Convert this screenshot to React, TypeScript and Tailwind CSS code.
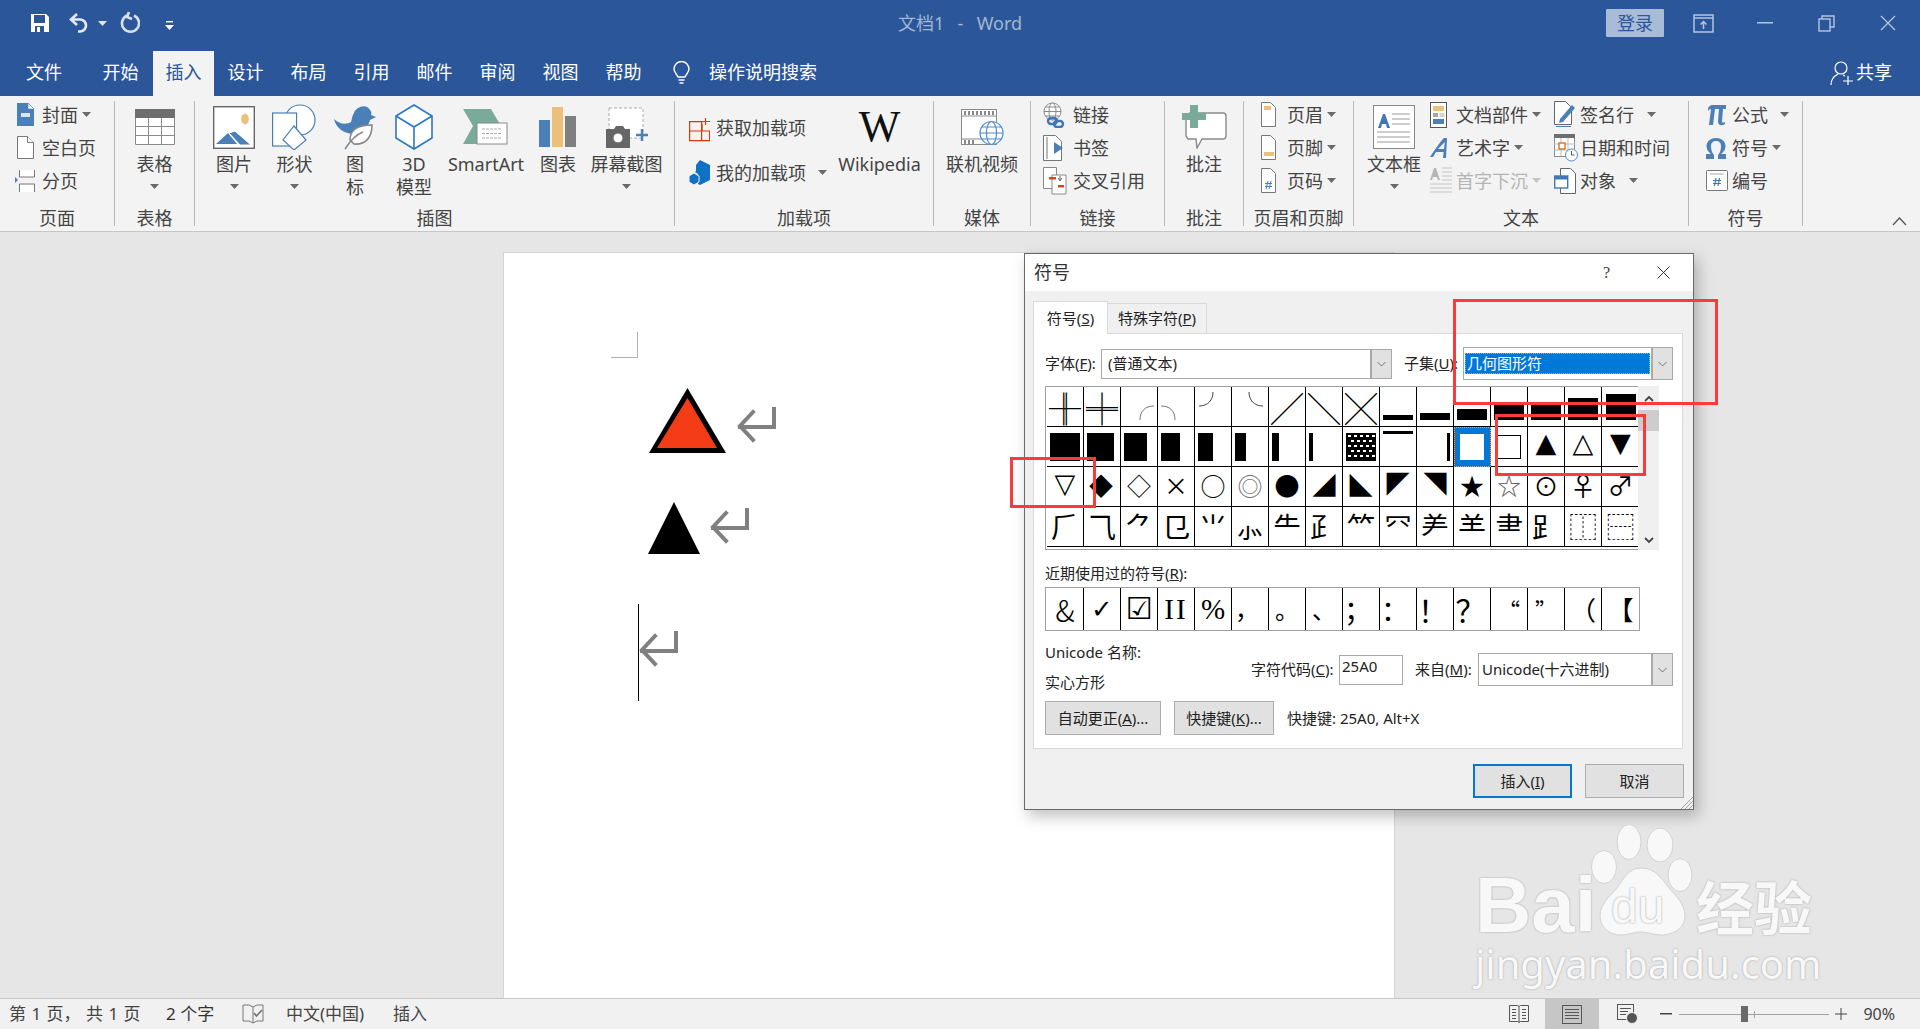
import React from "react";

const Caret = ({ c = "#6a6a6a" }: { c?: string }) => (
  <svg width="9" height="5" viewBox="0 0 9 5" className="shrink-0"><path d="M0 0h9L4.5 5z" fill={c} /></svg>
);

const I = {
  save: <svg width="20" height="20" viewBox="0 0 20 20"><path d="M1 1h15l3 3v15H1z" fill="#fff" /><rect x="4" y="2" width="11" height="8" fill="#2b579a" /><rect x="5" y="13" width="9" height="6" fill="#2b579a" /><rect x="7" y="14" width="3" height="5" fill="#fff" /></svg>,
  undo: <svg width="22" height="22" viewBox="0 0 22 22" fill="none" stroke="#e4e9f2" strokeWidth="2.6"><path d="M9 2 3 7.5 9 13" /><path d="M3 7.5h9a6 6 0 0 1 0 12h-2" /></svg>,
  redo: <svg width="20" height="24" viewBox="0 0 20 24" fill="none" stroke="#d6dfed" strokeWidth="2.6"><path d="M7 4.5a8.5 8.5 0 1 0 7 0" /><path d="M9 1 7 6l5 2" /></svg>,
  qat: <svg width="9" height="9" viewBox="0 0 9 9"><rect x="1" y="0" width="7" height="1.4" fill="#fff" /><path d="M0 4h9L4.5 9z" fill="#fff" /></svg>,
  bulb: <svg width="17" height="24" viewBox="0 0 17 24" fill="none" stroke="#fff" strokeWidth="1.4"><path d="M5 16C3 12 1 10.500 1 8a7.500 7.500 0 0 1 15 0c0 2.500-2 4-4 8z" /><path d="M5.500 19h6M6.500 22h4" /></svg>,
  share: <svg width="24" height="26" viewBox="0 0 24 26" fill="none" stroke="#fff" strokeWidth="1.2"><circle cx="11" cy="8" r="6" /><path d="M1 25c0-6 3-9 7-11M13 15l2 1" /><path d="M13 21h10M18 16v9" /></svg>,
  disp: <svg width="21" height="19" viewBox="0 0 21 19" fill="none" stroke="#b5c5dd" strokeWidth="1.5"><rect x="1" y="1" width="19" height="17" /><path d="M1 4h19" /><path d="M10.500 15V8M7.500 10.500l3-3 3 3" /></svg>,
  minus: <svg width="16" height="2" viewBox="0 0 16 2"><rect width="16" height="1.500" fill="#b5c5dd" /></svg>,
  restore: <svg width="17" height="17" viewBox="0 0 17 17" fill="none" stroke="#b5c5dd" strokeWidth="1.400"><rect x="1" y="4" width="11" height="12" /><path d="M4 4V1h12v11h-4" /></svg>,
  close: <svg width="16" height="16" viewBox="0 0 16 16" fill="none" stroke="#b5c5dd" strokeWidth="1.300"><path d="M1 1l14 14M15 1 1 15" /></svg>,
  cover: <svg width="17" height="23" viewBox="0 0 17 23"><path d="M0 0h11l6 6v17H0z" fill="#4a7fb8" /><path d="M11 0l6 6h-6z" fill="#fff" stroke="#4a7fb8" strokeWidth=".6" /><rect x="4" y="10" width="9" height="4" fill="#dbe6f2" /></svg>,
  blank: <svg width="17" height="23" viewBox="0 0 17 23" fill="#fff" stroke="#777"><path d="M.5.500h10l6 6v16H.500z" /><path d="M10.500.500v6h6" /></svg>,
  pgbreak: <svg width="21" height="24" viewBox="0 0 21 24"><path d="M0 8l3 3-3 3z" fill="#4a7fb8" /><path d="M4.500 1v7h15V1M4.500 23v-8h15v8" fill="#fff" stroke="#777" /></svg>,
  table: <svg width="40" height="36" viewBox="0 0 40 36"><rect width="40" height="36" fill="#fff" /><rect width="40" height="9" fill="#6e6e6e" /><path d="M.5 9v26.500h39V9M.5 17.500h39M.5 26.500h39M13.500 9v26M26.500 9v26" fill="none" stroke="#8a8a8a" /></svg>,
  picture: <svg width="42" height="43" viewBox="0 0 42 43"><rect x=".7" y=".7" width="40.600" height="41.600" fill="#fff" stroke="#666" strokeWidth="1.400" /><ellipse cx="32" cy="13" rx="3.800" ry="5.400" fill="#edc07a" /><path d="M3 38 15 27l9 11z" fill="#4a7fb8" /><path d="M16 27l6-2 16 14H27z" fill="#4a7fb8" stroke="#fff" /></svg>,
  shape: <svg width="45" height="46" viewBox="0 0 45 46" fill="#fff" stroke="#4a7fb8" strokeWidth="1.200"><circle cx="28" cy="16" r="15" /><rect x=".6" y="9" width="24" height="33" /><path d="M22 22l12 14-12 10-11-10z" /></svg>,
  duck: <svg width="43" height="46" viewBox="0 0 43 46"><path d="M0 15c5 5 12 6 17 3 1-3 1-6 3-9 2-6 12-10 16-3 1 1 2 3 1 5l5 2-6 3c-2 8-9 14-15 14C10 30 2 24 0 15z" fill="#4a7fb8" /><path d="M16 36c0-10 8-15 22-15 0 12-6 20-18 19z" fill="#fff" stroke="#888" strokeWidth="1.600" /><path d="M11 45c5-8 10-14 18-17" fill="none" stroke="#888" strokeWidth="1.600" /></svg>,
  cube: <svg width="40" height="46" viewBox="0 0 40 46" fill="#fff" stroke="#2a78c6" strokeWidth="1.600"><path d="M20 1l18 11v22L20 45 2 34V12z" /><path d="M2 12l18 11 18-11M20 23v22" /></svg>,
  smart: <svg width="46" height="36" viewBox="0 0 46 36"><path d="M0 0h28l10 17-10 18H0l10-18z" fill="#7aab9a" /><rect x="14" y="14" width="30" height="21" fill="#fff" stroke="#888" /><path d="M19 20h20M19 24.500h20M19 29h20" stroke="#aaa" strokeDasharray="3 1" /></svg>,
  chart: <svg width="38" height="40" viewBox="0 0 38 40"><rect y="13" width="11" height="27" fill="#4a7fb8" /><rect x="13" width="11" height="40" fill="#edc07a" /><rect x="26" y="9" width="11" height="31" fill="#7f7f7f" /></svg>,
  shot: <svg width="42" height="41" viewBox="0 0 42 41"><rect x="3" y="1" width="34" height="30" fill="#fff" stroke="#aaa" strokeDasharray="3 2" /><path d="M0 22h8l2-3h7l2 3h5v19H0z" fill="#666" /><circle cx="12" cy="31" r="5" fill="#fff" stroke="#666" /><path d="M36 22v12M30 28h12" stroke="#4a7fb8" strokeWidth="2.400" /></svg>,
  store: <svg width="21" height="29" viewBox="0 0 21 29" fill="none" stroke="#d83b01" strokeWidth="1.200"><path d="M.6 8.600h12v19H.6zM.6 18h20v9.600h-8M12.600 8.600h1" /><path d="M13 18v-7M16.500 5v7M13 8.500h8" /></svg>,
  mine: <svg width="22" height="25" viewBox="0 0 22 25"><path d="M11 0l10 5v15l-10 5-2-1V14l-3-2 1-1V5z" fill="#0e71c5" /><path d="M5 13l5 3v6l-5 3-5-3v-6z" fill="#0e71c5" stroke="#f3f3f3" /></svg>,
  video: <svg width="43" height="37" viewBox="0 0 43 37"><rect x=".5" y=".5" width="35" height="35" fill="#fff" stroke="#8a8a8a" /><path d="M.5 7h35M.5 30h35" stroke="#8a8a8a" /><path d="M4 2v4M8 2v4M12 2v4M16 2v4M20 2v4M24 2v4M28 2v4M32 2v4M4 31v4M8 31v4M12 31v4" stroke="#8a8a8a" strokeWidth="2" /><g fill="#fff" stroke="#4a8cc9" strokeWidth="1.200"><circle cx="30.500" cy="24" r="11.500" /><ellipse cx="30.500" cy="24" rx="5" ry="11.500" /><path d="M19 24h23M21 18h19M21 30h19" /></g></svg>,
  link: <svg width="23" height="26" viewBox="0 0 23 26"><g fill="#fff" stroke="#8a8a8a"><circle cx="9.500" cy="9.500" r="8.500" /><ellipse cx="9.500" cy="9.500" rx="3.500" ry="8.500" /><path d="M1 9.500h17M2.500 5h14M2.500 14h14" /></g><g fill="none" stroke="#3f78b5" strokeWidth="2.400"><rect x="5" y="16" width="9" height="6" rx="3" /><rect x="11" y="19" width="9" height="6" rx="3" /></g></svg>,
  mark: <svg width="21" height="26" viewBox="0 0 21 26"><path d="M.5.500h12l6 6v19H.5z" fill="#fff" stroke="#777" /><path d="M4 2v22" stroke="#777" /><path d="M11 7l9 6-9 6z" fill="#4a7fb8" /></svg>,
  cross: <svg width="24" height="28" viewBox="0 0 24 28"><path d="M.5.500h13l0 21H.5z" fill="#fff" stroke="#888" /><path d="M9 8h14v19H9z" fill="#fff" stroke="#888" /><rect x="6" y="10" width="7" height="2.500" fill="#cf4a1f" /><path d="M17 9v4M15 11l2 3 2-3" fill="none" stroke="#666" /><rect x="15" y="18" width="6" height="2.500" fill="#cf4a1f" /></svg>,
  comment: <svg width="45" height="44" viewBox="0 0 45 44"><path d="M8 8h33a3 3 0 0 1 3 3v20a3 3 0 0 1-3 3H20l-5 9-1-9H6l-2-3V10z" fill="#fff" stroke="#8a8a8a" strokeWidth="1.400" /><path d="M8 0h8v8h8v7h-8v8H8v-8H0V8h8z" fill="#7aab9a" /></svg>,
  head: <svg width="15" height="25" viewBox="0 0 15 25"><path d="M.5.500h9l5 5v19H.5z" fill="#fff" stroke="#777" /><rect x="3" y="4" width="7" height="4" fill="#edc07a" /></svg>,
  foot: <svg width="15" height="25" viewBox="0 0 15 25"><path d="M.5.500h9l5 5v19H.5z" fill="#fff" stroke="#777" /><rect x="3" y="17" width="10" height="4" fill="#edc07a" /></svg>,
  pnum: <svg width="15" height="25" viewBox="0 0 15 25"><path d="M.5.500h9l5 5v19H.5z" fill="#fff" stroke="#777" /><path d="M7 13l-2 8M10 13l-2 8M4 15.500h7M4 18.500h7" stroke="#4a7fb8" /></svg>,
  textbox: <svg width="42" height="44" viewBox="0 0 42 44"><rect x=".5" y=".5" width="41" height="43" fill="#fff" stroke="#888" /><path d="M5 23 10 9h2l5 14h-3l-1-4H9l-1 4z" fill="#3f78b5" /><path d="M19 9h18M19 14h18M19 19h18M4 27h33M4 32h33M4 37h33" stroke="#999" /></svg>,
  parts: <svg width="17" height="26" viewBox="0 0 17 26"><rect x=".5" y=".5" width="16" height="25" fill="#fff" stroke="#555" /><rect x="3" y="4" width="11" height="5" fill="#edc07a" /><rect x="3" y="11" width="5" height="4" fill="#a6a6a6" /><path d="M9.500 12h5M9.500 14h5" stroke="#a6a6a6" /><rect x="3" y="17" width="11" height="5" fill="#4a7fb8" /></svg>,
  wordart: <svg width="17" height="22" viewBox="0 0 17 22"><path d="M0 20C4 14 9 6 14 1h3l-1 20h-3l.6-6H6l-3 5zM8 12h6l.8-7z" fill="#4a7fb8" /></svg>,
  dropcap: <svg width="22" height="27" viewBox="0 0 22 27"><path d="M0 13 4 1h2l4 12H8l-1-3H3l-1 3z" fill="#b5b5b5" /><path d="M12 1h10M12 5h10M12 9h10M12 13h10M0 17h22M0 21h22M0 25h22" stroke="#c4c4c4" /></svg>,
  sign: <svg width="22" height="27" viewBox="0 0 22 27"><path d="M.5.500h11l6 6v17H.5z" fill="#fff" stroke="#666" /><path d="M6 18 18 4l3 3L9 21l-4 1z" fill="#4a7fb8" /><path d="M2 25.500h15" stroke="#4a7fb8" /></svg>,
  date: <svg width="24" height="28" viewBox="0 0 24 28"><rect x=".5" y=".5" width="20" height="22" fill="#fff" stroke="#8a8a8a" /><rect width="21" height="4" fill="#6e6e6e" /><path d="M7 4v18M14 4v18M0 10h21M0 16h21" stroke="#bbb" /><rect x="5" y="9" width="6" height="6" fill="#fff" stroke="#d8690f" strokeWidth="1.300" /><circle cx="17.500" cy="21" r="6" fill="#fff" stroke="#4a8cc9" /><path d="M17.500 17v4h3" fill="none" stroke="#555" /></svg>,
  obj: <svg width="22" height="26" viewBox="0 0 22 26"><path d="M6.500.500h10l5 5v20h-15z" fill="#fff" stroke="#666" /><rect x=".7" y="8" width="13" height="12" fill="#fff" stroke="#3f78b5" strokeWidth="1.400" /><rect y="8" width="14" height="3.500" fill="#3f78b5" /></svg>,
  pi: <svg width="20" height="22" viewBox="0 0 20 22"><path d="M2 6c0-3 2-5 5-5h13v4h-3l-1 12c0 2 1 2 3 1v2c-3 2-7 2-7-3l1-12H9l-2 16H3L5 5C3 5 3 6 2.500 7z" fill="#4a7fb8" /></svg>,
  omega: <svg width="20" height="22" viewBox="0 0 20 22"><path d="M0 22v-5h5C2 15 .5 12 .5 9 .5 4 5 1 10 1s9.500 3 9.500 8c0 3-1.500 6-4.500 8h5v5h-8v-4c2-2 3-5 3-9 0-3-2-5-5-5s-5 2-5 5c0 4 1 7 3 9v4z" fill="#4a7fb8" /></svg>,
  num: <svg width="22" height="22" viewBox="0 0 22 22"><rect x=".5" y=".5" width="21" height="20" rx="1" fill="#fff" stroke="#777" /><path d="M4 4h14" stroke="#aaa" /><path d="M10 8l-1.500 8M13.500 8 12 16M7 10.500h8M7 13.500h8" stroke="#3f78b5" strokeWidth="1.200" /></svg>,
  book: <svg width="22" height="20" viewBox="0 0 22 20" fill="none" stroke="#777"><path d="M11 3 7 1H1v16h6l4 2 4-2h6V1h-6z" /><path d="M11 3v16" /><path d="M12 9l2.500 3L20 6" stroke="#777" strokeWidth="1.800" /></svg>,
  read: <svg width="20" height="18" viewBox="0 0 20 18" fill="none" stroke="#555"><path d="M.5.500h8l1.500 1 1.500-1h8v16h-8L10 17.500l-1.500-1h-8zM10 1.500v16M3 4.500h4M3 7.500h4M3 10.500h4M3 13.500h4M13 4.500h4M13 7.500h4M13 10.500h4M13 13.500h4" /></svg>,
  print: <svg width="20" height="19" viewBox="0 0 20 19" fill="none" stroke="#555"><rect x=".5" y=".5" width="19" height="18" /><path d="M3 4.500h14M3 7.500h14M3 10.500h14M3 13.500h14" /></svg>,
  web: <svg width="21" height="20" viewBox="0 0 21 20"><rect x=".5" y=".5" width="16" height="15" fill="none" stroke="#555" /><path d="M3 4.500h11M3 7.500h8M3 10.500h6" stroke="#555" /><circle cx="15" cy="14" r="5.500" fill="#555" stroke="#f1f1f1" /></svg>,
};

function Small({ icon, w, label, arrow, gap, dim, arrowGap }: { icon: React.ReactNode; w: string; label: string; arrow?: boolean; gap?: string; dim?: boolean; arrowGap?: string }) {
  return (
    <div className={`flex items-center h-[29px] ${gap || ""} ${dim ? "text-[#b4b4b4]" : ""}`}>
      <span className={`flex items-center justify-center shrink-0 ${w}`}>{icon}</span>
      <span className="whitespace-nowrap leading-none">{label}</span>
      {arrow && <span className={`${arrowGap || "ml-[4px]"} flex items-center`}><Caret c={dim ? "#c4c4c4" : "#6a6a6a"} /></span>}
    </div>
  );
}

function Big({ icon, w, lines, arrow }: { icon: React.ReactNode; w: string; lines: string[]; arrow?: boolean }) {
  return (
    <div className={`flex flex-col items-center shrink-0 ${w}`}>
      <div className="h-[52px] flex items-center justify-center">{icon}</div>
      {lines.map((l) => (
        <div key={l} className="h-[23px] leading-[23px] whitespace-nowrap">{l}</div>
      ))}
      {arrow && <div className="h-[21px] flex items-center"><Caret /></div>}
    </div>
  );
}

function Group({ w, label, children, noBorder }: { w: string; label: string; children: React.ReactNode; noBorder?: boolean }) {
  return (
    <div className={`flex flex-col h-[125px] mt-[5px] shrink-0 ${w} ${noBorder ? "" : "border-r border-[#b9b9b9]"}`}>
      <div className="flex-1 flex min-h-0">{children}</div>
      <div className="h-[18px] leading-[20px] text-center whitespace-nowrap">{label}</div>
    </div>
  );
}

const Col = ({ className, children }: { className: string; children: React.ReactNode }) => (
  <div className={`flex flex-col gap-[4px] -mt-[1px] ${className}`}>{children}</div>
);

function Cell({ c, last, children, align }: { c?: string; last?: boolean; children?: React.ReactNode; align?: string }) {
  return (
    <div className={`w-[37px] h-[40px] shrink-0 border-b border-black flex ${align || "items-center justify-center"} ${last ? "" : "border-r"} ${c || ""}`}>
      {children}
    </div>
  );
}

const geo = "font-['DejaVu_Sans',sans-serif] leading-none";
const cjk = "font-['Noto_Sans_CJK_SC',sans-serif] leading-none";
const serif = "font-['Liberation_Serif',serif] leading-none";

const Bar = ({ c }: { c: string }) => <div className={`bg-black shrink-0 ${c}`} />;

function SymbolGrid() {
  return (
    <div className="flex">
      <div className="w-[593px] h-[164px] border border-r-0 border-[#a0a0a0] pl-[1px] overflow-hidden text-black bg-white">
        <div className="flex">
          <Cell><span className={`${cjk} text-[32px]`}>╫</span></Cell>
          <Cell><span className={`${cjk} text-[32px]`}>╪</span></Cell>
          <Cell align="items-end justify-end pr-[2px] pb-[6px]"><svg width="16" height="15" viewBox="0 0 16 15" fill="none" stroke="#777"><path d="M1 15C1 6 6 1 15 1" /></svg></Cell>
          <Cell align="items-end justify-start pl-[2px] pb-[6px]"><svg width="16" height="15" viewBox="0 0 16 15" fill="none" stroke="#777"><path d="M1 1c9 0 14 5 14 14" /></svg></Cell>
          <Cell align="items-start justify-start pl-[3px]"><svg width="16" height="16" viewBox="0 0 16 16" fill="none" stroke="#444" className="mt-[5px]"><path d="M15 0c0 8-5 14-14 14" /></svg></Cell>
          <Cell align="items-start justify-end pr-[4px]"><svg width="16" height="16" viewBox="0 0 16 16" fill="none" stroke="#444" className="mt-[5px]"><path d="M1 0c0 8 5 14 14 14" /></svg></Cell>
          <Cell><span className={`${cjk} text-[32px]`}>╱</span></Cell>
          <Cell><span className={`${cjk} text-[32px]`}>╲</span></Cell>
          <Cell><span className={`${cjk} text-[32px]`}>╳</span></Cell>
          <Cell align="items-end justify-center pb-[6px]"><Bar c="w-[30px] h-[5px]" /></Cell>
          <Cell align="items-end justify-center pb-[6px]"><Bar c="w-[30px] h-[7px]" /></Cell>
          <Cell align="items-end justify-center pb-[6px]"><Bar c="w-[30px] h-[11px]" /></Cell>
          <Cell align="items-end justify-center pb-[6px]"><Bar c="w-[30px] h-[15px]" /></Cell>
          <Cell align="items-end justify-center pb-[6px]"><Bar c="w-[30px] h-[18px]" /></Cell>
          <Cell align="items-end justify-center pb-[6px]"><Bar c="w-[30px] h-[22px]" /></Cell>
          <Cell last align="items-end justify-center pb-[6px]"><Bar c="w-[30px] h-[26px]" /></Cell>
        </div>
        <div className="flex">
          <Cell align="items-center justify-start pl-[3px]"><Bar c="w-[30px] h-[28px]" /></Cell>
          <Cell align="items-center justify-start pl-[3px]"><Bar c="w-[27px] h-[28px]" /></Cell>
          <Cell align="items-center justify-start pl-[3px]"><Bar c="w-[23px] h-[28px]" /></Cell>
          <Cell align="items-center justify-start pl-[3px]"><Bar c="w-[19px] h-[28px]" /></Cell>
          <Cell align="items-center justify-start pl-[3px]"><Bar c="w-[15px] h-[28px]" /></Cell>
          <Cell align="items-center justify-start pl-[3px]"><Bar c="w-[11px] h-[28px]" /></Cell>
          <Cell align="items-center justify-start pl-[3px]"><Bar c="w-[7px] h-[28px]" /></Cell>
          <Cell align="items-center justify-start pl-[3px]"><Bar c="w-[4px] h-[28px]" /></Cell>
          <Cell><svg width="30" height="28" viewBox="0 0 30 28"><rect width="30" height="28" fill="#000" /><path d="M2 3h3M8 3h3M14 3h3M20 3h3M26 3h3M5 8h3M11 8h3M17 8h3M23 8h3M2 13h3M8 13h3M14 13h3M20 13h3M26 13h3M5 18h3M11 18h3M17 18h3M23 18h3M2 23h3M8 23h3M14 23h3M20 23h3M26 23h3" stroke="#fff" strokeWidth="2" /></svg></Cell>
          <Cell align="items-start justify-center pt-[4px]"><Bar c="w-[30px] h-[2.500px]" /></Cell>
          <Cell align="items-center justify-end pr-[3px]"><Bar c="w-[3.500px] h-[28px]" /></Cell>
          <Cell c="bg-[#0078d7] border-dotted !border-[#f39c4a] outline-1 -outline-offset-1 outline-dotted outline-[#e8a060]"><div className="w-[24px] h-[26px] bg-white" aria-label="■" /></Cell>
          <Cell><div className="w-[24px] h-[24px] border-[1.500px] border-black bg-white" aria-label="□" /></Cell>
          <Cell><span className={`${geo} text-[27px] -mt-[8px]`}>▲</span></Cell>
          <Cell><span className={`${geo} text-[27px] -mt-[8px]`}>△</span></Cell>
          <Cell last><span className={`${geo} text-[27px] -mt-[8px]`}>▼</span></Cell>
        </div>
        <div className="flex">
          <Cell><span className={`${geo} text-[27px] -mt-[7px]`}>▽</span></Cell>
          <Cell><span className={`${cjk} text-[24px] -mt-[3px] -ml-[2px]`}>◆</span></Cell>
          <Cell><span className={`${cjk} text-[24px] -mt-[3px]`}>◇</span></Cell>
          <Cell><span className={`${cjk} text-[24px] -mt-[3px]`}>×</span></Cell>
          <Cell><span className={`${cjk} text-[25px] -mt-[3px]`}>○</span></Cell>
          <Cell><span className={`${cjk} text-[25px] -mt-[3px] text-[#777]`}>◎</span></Cell>
          <Cell><span className={`${cjk} text-[25px] -mt-[3px]`}>●</span></Cell>
          <Cell><span className={`${geo} text-[30px] -mt-[7px]`}>◢</span></Cell>
          <Cell><span className={`${geo} text-[30px] -mt-[7px]`}>◣</span></Cell>
          <Cell><span className={`${geo} text-[30px] -mt-[9px]`}>◤</span></Cell>
          <Cell><span className={`${geo} text-[30px] -mt-[9px]`}>◥</span></Cell>
          <Cell><span className={`${cjk} text-[24px] -mt-[3px]`}>★</span></Cell>
          <Cell><span className={`${cjk} text-[24px] -mt-[3px] text-[#555]`}>☆</span></Cell>
          <Cell><span className={`${cjk} text-[25px] -mt-[3px]`}>⊙</span></Cell>
          <Cell><span className={`${cjk} text-[26px] -mt-[3px]`}>♀</span></Cell>
          <Cell last><span className={`${cjk} text-[26px] -mt-[3px]`}>♂</span></Cell>
        </div>
        <div className="flex">
          {["⺁", "⺄", "⺈", "⺋", "⺌", "⺗", "⺧", "⺪", "⺮", "⺳", "⺶", "⺷", "⺻", "⻊", "⿰", "⿱"].map((g, i) => (
            <Cell key={g} last={i === 15}><span className={`${cjk} text-[28px] -mt-[2px]`}>{g}</span></Cell>
          ))}
        </div>
      </div>
      <div className="w-[21px] h-[164px] bg-[#f0f0f0] flex flex-col items-center pt-[9px]">
        <svg width="10" height="7" viewBox="0 0 10 7" fill="none" stroke="#444" strokeWidth="1.800"><path d="M1 6l4-4 4 4" /></svg>
        <div className="w-full h-[21px] bg-[#cdcdcd] mt-[8px]" />
        <div className="flex-1" />
        <svg width="10" height="7" viewBox="0 0 10 7" fill="none" stroke="#444" strokeWidth="1.800" className="mb-[6px]"><path d="M1 1l4 4 4-4" /></svg>
      </div>
    </div>
  );
}

function Chevron({ h }: { h: string }) {
  return (
    <div className={`w-[21px] ${h} bg-[#e1e1e1] border-l-2 border-[#a9a9a9] flex items-center justify-center shrink-0`}>
      <svg width="9" height="6" viewBox="0 0 9 6" fill="none" stroke="#777"><path d="M.5 1l4 4 4-4" /></svg>
    </div>
  );
}

function DialogBtn({ w, children, primary }: { w: string; children: React.ReactNode; primary?: boolean }) {
  return (
    <div className={`${w} h-[34px] flex items-center justify-center bg-[#e1e1e1] ${primary ? "border-2 border-[#0078d7]" : "border border-[#adadad]"}`}>{children}</div>
  );
}

function SymbolDialog() {
  const recent: [string, string][] = [
    ["&", `${cjk} text-[30px] font-light`], ["✓", `${geo} text-[26px] font-bold`], ["☑", `${geo} text-[30px]`], ["II", `${serif} text-[29px] tracking-[2px]`], ["%", `${serif} text-[29px]`],
    ["，", `${cjk} text-[24px] mr-[6px]`], ["。", `${cjk} text-[24px]`], ["、", `${cjk} text-[24px]`], ["；", `${cjk} text-[28px] mr-[6px]`], ["：", `${cjk} text-[28px] mr-[6px]`],
    ["！", `${cjk} text-[30px] mr-[4px]`], ["？", `${cjk} text-[30px] mr-[3px]`], ["“", `${cjk} text-[22px]`], ["”", `${cjk} text-[22px]`], ["（", `${cjk} text-[26px]`], ["【", `${cjk} text-[26px]`],
  ];
  return (
    <div className="absolute left-[1024px] top-[253px] w-[670px] h-[557px] border border-[#6a6a6a] bg-[#f0f0f0] flex flex-col text-[15px] text-[#222] shadow-[4px_6px_14px_rgba(0,0,0,0.25)]">
      <div className="h-[37px] bg-white flex items-center shrink-0 pl-[9px]">
        <span className="text-[18px] text-[#333]">符号</span>
        <span className="ml-auto text-[16px] text-[#444] font-['Liberation_Serif',serif] mr-[47px]">?</span>
        <svg width="13" height="13" viewBox="0 0 13 13" fill="none" stroke="#333" className="mr-[23px]"><path d="M.5.500l12 12M12.500.500l-12 12" /></svg>
      </div>
      <div className="flex h-[42px] items-end pl-[8px] shrink-0">
        <div className="w-[75px] h-[33px] bg-white border border-b-0 border-[#d9d9d9] flex items-center justify-center relative top-[1px] z-10">符号(<u>S</u>)</div>
        <div className="w-[99px] h-[30px] bg-[#f0f0f0] border border-b-0 border-l-0 border-[#d9d9d9] flex items-center justify-center">特殊字符(<u>P</u>)</div>
      </div>
      <div className="ml-[8px] w-[650px] h-[416px] bg-white border border-[#d9d9d9] pl-[11px] shrink-0">
        <div className="flex items-center mt-[13px] h-[33px]">
          <span className="w-[56px] whitespace-nowrap">字体(<u>F</u>):</span>
          <div className="w-[291px] h-[30px] flex items-center border border-[#a9a9a9]">
            <span className="flex-1 pl-[6px]">(普通文本)</span>
            <Chevron h="h-full" />
          </div>
          <span className="w-[59px] ml-[12px] whitespace-nowrap">子集(<u>U</u>):</span>
          <div className="w-[210px] h-[33px] flex items-center border border-[#a9a9a9]">
            <span className="flex-1 mx-[1px] h-[21px] bg-[#0078d7] text-white border border-dotted border-[#f39c4a] flex items-center pl-[1px]">几何图形符</span>
            <Chevron h="h-full" />
          </div>
        </div>
        <div className="mt-[6px]"><SymbolGrid /></div>
        <div className="mt-[13px] h-[20px] leading-[20px]">近期使用过的符号(<u>R</u>):</div>
        <div className="mt-[4px] w-[595px] h-[44px] border border-[#a0a0a0] flex pl-[1px] text-black">
          {recent.map(([g, c], i) => (
            <div key={g} className={`w-[37px] h-full flex items-center justify-center shrink-0 border-black ${i === 15 ? "" : "border-r"}`}>
              <span className={c}>{g}</span>
            </div>
          ))}
        </div>
        <div className="flex mt-[11px]">
          <div className="w-[206px] shrink-0">
            <div className="h-[20px] leading-[20px]">Unicode 名称:</div>
            <div className="h-[20px] leading-[20px] mt-[10px]">实心方形</div>
          </div>
          <div className="flex items-center h-[33px] mt-[11px]">
            <span className="w-[88px] whitespace-nowrap">字符代码(<u>C</u>):</span>
            <div className="w-[64px] h-[30px] border border-[#a9a9a9] pl-[2px] leading-[20px] bg-white">25A0</div>
            <span className="w-[63px] ml-[12px] whitespace-nowrap">来自(<u>M</u>):</span>
            <div className="w-[195px] h-[33px] flex items-center border border-[#a9a9a9]">
              <span className="flex-1 pl-[3px]">Unicode(十六进制)</span>
              <Chevron h="h-full" />
            </div>
          </div>
        </div>
        <div className="flex items-center mt-[9px]">
          <DialogBtn w="w-[116px]">自动更正(<u>A</u>)...</DialogBtn>
          <div className="w-[13px]" />
          <DialogBtn w="w-[100px]">快捷键(<u>K</u>)...</DialogBtn>
          <span className="ml-[13px]">快捷键: 25A0, Alt+X</span>
        </div>
      </div>
      <div className="flex justify-end gap-[13px] pr-[9px] mt-[15px]">
        <DialogBtn w="w-[99px]" primary>插入(<u>I</u>)</DialogBtn>
        <DialogBtn w="w-[99px]">取消</DialogBtn>
      </div>
      <svg width="13" height="13" viewBox="0 0 13 13" className="absolute right-0 bottom-0" stroke="#a0a0a0" fill="none"><path d="M13 1 1 13M13 5l-8 8M13 9l-4 4" /></svg>
    </div>
  );
}

const ReturnMark = () => (
  <svg width="40" height="37" viewBox="0 0 40 37" fill="none" stroke="#808080" strokeWidth="4" strokeLinecap="square" className="shrink-0">
    <path d="M37 2v18H3" /><path d="M16 5 3 19 16 33" />
  </svg>
);

function Watermark() {
  const wm = "text-[#f8f8f8] [text-shadow:0_0_2px_#999]";
  return (
    <div className="absolute left-[1475px] top-[825px] w-[345px] h-[165px] pointer-events-none">
      <svg width="104" height="112" viewBox="0 0 104 112" className="absolute left-[116px] top-0" fill="#f8f8f8" stroke="#d2d2d2">
        <ellipse cx="13" cy="42" rx="12.500" ry="16.500" />
        <ellipse cx="38" cy="17" rx="12" ry="17.500" />
        <ellipse cx="69" cy="20" rx="13" ry="17" />
        <ellipse cx="89" cy="50" rx="12" ry="16.500" />
        <path d="M50 43c14 0 20 10 28 20 7 8 16 16 16 28 0 12-12 19-24 19-8 0-13-3-20-3-7 0-12 3-20 3-12 0-21-8-21-19 0-12 10-20 17-28 7-9 11-20 24-20z" />
      </svg>
      <span className={`absolute left-[136px] top-[53px] text-[48px] leading-[58px] ${wm} font-['Liberation_Sans',sans-serif]`}>du</span>
      <span className={`absolute left-0 top-[45px] text-[78px] leading-[70px] font-bold ${wm} font-['Liberation_Sans',sans-serif]`}>Bai</span>
      <span className={`absolute left-[221px] top-[45px] text-[58px] leading-[70px] font-bold ${wm} font-['Noto_Sans_CJK_SC',sans-serif] whitespace-nowrap`}>经验</span>
      <span className={`absolute left-0 top-[117px] text-[40px] leading-[44px] ${wm} font-['Noto_Sans',sans-serif] whitespace-nowrap`}>jingyan.baidu.com</span>
    </div>
  );
}

export default function App() {
  const tabs = ["设计", "布局", "引用", "邮件", "审阅", "视图", "帮助"];
  const tabC = "h-[45px] flex items-center justify-center pb-[2px]";
  return (
    <div className="relative w-[1920px] h-[1029px] overflow-hidden flex flex-col font-['Noto_Sans','Noto_Sans_CJK_SC',sans-serif] text-[18px] text-[#444] bg-[#e6e6e6]">
      {/* Title bar */}
      <div className="h-[46px] bg-[#2b579a] flex items-center shrink-0">
        <div className="flex-1 flex items-center pl-[30px]">
          {I.save}
          <span className="ml-[18px]">{I.undo}</span>
          <span className="ml-[8px]"><Caret c="#dfe6f1" /></span>
          <span className="ml-[13px]">{I.redo}</span>
          <span className="ml-[25px] mt-[5px]">{I.qat}</span>
        </div>
        <div className="text-[#a3b6d3] whitespace-pre [word-spacing:2px] mr-[6px]">文档1  -  Word</div>
        <div className="flex-1 flex items-center justify-end pr-[24px]">
          <div className="w-[58px] h-[28px] bg-[#a9bcd7] rounded-[1px] text-[#2b579a] flex items-center justify-center">登录</div>
          <span className="ml-[29px] flex">{I.disp}</span>
          <span className="ml-[43px] flex">{I.minus}</span>
          <span className="ml-[45px] flex">{I.restore}</span>
          <span className="ml-[45px] flex">{I.close}</span>
        </div>
      </div>
      {/* Tabs */}
      <div className="h-[50px] bg-[#2b579a] flex items-end shrink-0 text-white">
        <div className={`w-[88px] ${tabC}`}>文件</div>
        <div className={`w-[65px] ${tabC}`}>开始</div>
        <div className={`w-[61px] ${tabC} bg-[#f3f3f3] text-[#2b579a]`}>插入</div>
        {tabs.map((t) => (
          <div key={t} className={`w-[63px] ${tabC}`}>{t}</div>
        ))}
        <div className="h-[45px] flex items-center ml-[18px] pb-[2px]">{I.bulb}</div>
        <div className="h-[45px] flex items-center ml-[19px] pb-[2px]">操作说明搜索</div>
        <div className="flex-1 h-[45px] flex items-center justify-end pr-[28px] pb-[2px]">
          {I.share}
          <span className="ml-[2px]">共享</span>
        </div>
      </div>
      {/* Ribbon */}
      <div className="relative h-[136px] bg-[#f3f3f3] border-b border-[#c6c6c6] flex shrink-0">
        <Group w="w-[115px]" label="页面">
          <Col className="pl-[9px]">
            <Small w="w-[33px]" icon={I.cover} label="封面" arrow />
            <Small w="w-[33px]" icon={I.blank} label="空白页" />
            <Small w="w-[33px]" icon={I.pgbreak} label="分页" />
          </Col>
        </Group>
        <Group w="w-[80px]" label="表格">
          <Big w="w-[79px]" icon={I.table} lines={["表格"]} arrow />
        </Group>
        <Group w="w-[480px]" label="插图">
          <div className="flex pl-[9px]">
            <Big w="w-[60px]" icon={I.picture} lines={["图片"]} arrow />
            <Big w="w-[61px]" icon={I.shape} lines={["形状"]} arrow />
            <Big w="w-[60px]" icon={I.duck} lines={["图", "标"]} />
            <Big w="w-[58px]" icon={I.cube} lines={["3D", "模型"]} />
            <Big w="w-[86px]" icon={I.smart} lines={["SmartArt"]} />
            <Big w="w-[58px]" icon={I.chart} lines={["图表"]} />
            <Big w="w-[79px]" icon={I.shot} lines={["屏幕截图"]} arrow />
          </div>
        </Group>
        <Group w="w-[259px]" label="加载项">
          <div className="flex flex-col pl-[14px] pt-[12px] gap-[16px] w-[167px]">
            <Small w="w-[27px] justify-start" icon={I.store} label="获取加载项" />
            <Small w="w-[27px] justify-start" icon={I.mine} label="我的加载项" arrow arrowGap="ml-[12px]" />
          </div>
          <Big w="w-[85px] ml-[-5px]" icon={<span className="font-['Liberation_Serif',serif] text-[44px] leading-none text-[#111]">W</span>} lines={["Wikipedia"]} />
        </Group>
        <Group w="w-[97px]" label="媒体">
          <Big w="w-[96px]" icon={I.video} lines={["联机视频"]} />
        </Group>
        <Group w="w-[134px]" label="链接">
          <Col className="pl-[12px]">
            <Small w="w-[30px] justify-start" icon={I.link} label="链接" />
            <Small w="w-[30px] justify-start" icon={I.mark} label="书签" />
            <Small w="w-[30px] justify-start" icon={I.cross} label="交叉引用" />
          </Col>
        </Group>
        <Group w="w-[79px]" label="批注">
          <Big w="w-[78px]" icon={I.comment} lines={["批注"]} />
        </Group>
        <Group w="w-[110px]" label="页眉和页脚">
          <Col className="pl-[17px]">
            <Small w="w-[26px] justify-start" icon={I.head} label="页眉" arrow />
            <Small w="w-[26px] justify-start" icon={I.foot} label="页脚" arrow />
            <Small w="w-[26px] justify-start" icon={I.pnum} label="页码" arrow />
          </Col>
        </Group>
        <Group w="w-[335px]" label="文本">
          <Big w="w-[72px] ml-[4px]" icon={I.textbox} lines={["文本框"]} arrow />
          <Col className="w-[124px]">
            <Small w="w-[26px] justify-start" icon={I.parts} label="文档部件" arrow />
            <Small w="w-[26px] justify-start" icon={I.wordart} label="艺术字" arrow />
            <Small w="w-[26px] justify-start" icon={I.dropcap} label="首字下沉" arrow dim />
          </Col>
          <Col className="">
            <Small w="w-[26px] justify-start" icon={I.sign} label="签名行" arrow arrowGap="ml-[13px]" />
            <Small w="w-[26px] justify-start" icon={I.date} label="日期和时间" />
            <Small w="w-[26px] justify-start" icon={I.obj} label="对象" arrow arrowGap="ml-[13px]" />
          </Col>
        </Group>
        <Group w="w-[114px]" label="符号">
          <Col className="pl-[17px]">
            <Small w="w-[26px] justify-start" icon={I.pi} label="公式" arrow arrowGap="ml-[12px]" />
            <Small w="w-[26px] justify-start" icon={I.omega} label="符号" arrow />
            <Small w="w-[26px] justify-start" icon={I.num} label="编号" />
          </Col>
        </Group>
        <svg width="15" height="9" viewBox="0 0 15 9" fill="none" stroke="#555" strokeWidth="1.300" className="absolute right-[13px] bottom-[5px]"><path d="M1 8l6.500-7L14 8" /></svg>
      </div>
      {/* Workspace */}
      <div className="flex-1 min-h-0 flex pt-[20px] pl-[503px]">
        <div className="w-[892px] h-full bg-white border border-b-0 border-[#d4d4d4] pl-[107px] pt-[79px]">
          <div className="w-[27px] h-[26px] border-r border-b border-[#b0b0b0]" />
          <div className="flex items-end mt-[30px] ml-[38px]">
            <svg width="77" height="65" viewBox="0 0 77 65" className="shrink-0"><path d="M38.500 0 77 65H0z" fill="#000" /><path d="M38.500 10 68 60H8z" fill="#f43c16" /></svg>
            <span className="ml-[11px] mb-[9px] flex"><ReturnMark /></span>
          </div>
          <div className="flex items-center mt-[49px] ml-[37px]">
            <svg width="52" height="52" viewBox="0 0 52 52" className="shrink-0"><path d="M26 0l26 52H0z" fill="#000" /></svg>
            <span className="ml-[10px] mb-[4px] flex"><ReturnMark /></span>
          </div>
          <div className="flex mt-[50px] ml-[27px]">
            <div className="w-[1px] h-[97px] bg-black shrink-0" />
            <span className="mt-[27px] flex"><ReturnMark /></span>
          </div>
        </div>
      </div>
      {/* Status bar */}
      <div className="h-[31px] bg-[#f1f1f1] border-t border-[#c6c6c6] flex items-center text-[17px] text-[#444] shrink-0 pl-[9px]">
        <span className="w-[157px] whitespace-pre [word-spacing:1px]">第 1 页， 共 1 页</span>
        <span className="w-[76px] whitespace-pre text-[#333]">2 个字</span>
        <span className="w-[44px] flex">{I.book}</span>
        <span className="w-[107px]">中文(中国)</span>
        <span>插入</span>
        <div className="ml-auto flex items-center h-full">
          <span className="flex">{I.read}</span>
          <div className="ml-[16px] w-[54px] h-full bg-[#c6c6c6] flex items-center justify-center">{I.print}</div>
          <span className="ml-[18px] flex">{I.web}</span>
          <svg width="12" height="2" viewBox="0 0 12 2" className="ml-[22px]"><rect width="12" height="1.500" fill="#444" /></svg>
          <div className="ml-[7px] w-[150px] h-[1px] bg-[#a0a0a0] relative flex items-center">
            <div className="absolute left-[62px] w-[7px] h-[16px] bg-[#6a6a6a]" />
            <div className="absolute left-[75px] w-[1px] h-[7px] bg-[#a0a0a0]" />
          </div>
          <svg width="12" height="12" viewBox="0 0 12 12" className="ml-[6px]" stroke="#444" fill="none"><path d="M0 6h12M6 0v12" /></svg>
          <span className="ml-[16px] mr-[25px] text-[16px]">90%</span>
        </div>
      </div>
      <SymbolDialog />
      <Watermark />
      {/* Red annotation boxes */}
      <div className="absolute left-[1453px] top-[299px] w-[265px] h-[106px] border-[3px] border-[#fb3a3a]" />
      <div className="absolute left-[1495px] top-[414px] w-[151px] h-[62px] border-[3px] border-[#fb3a3a]" />
      <div className="absolute left-[1010px] top-[457px] w-[86px] h-[51px] border-[3px] border-[#fb3a3a]" />
    </div>
  );
}
